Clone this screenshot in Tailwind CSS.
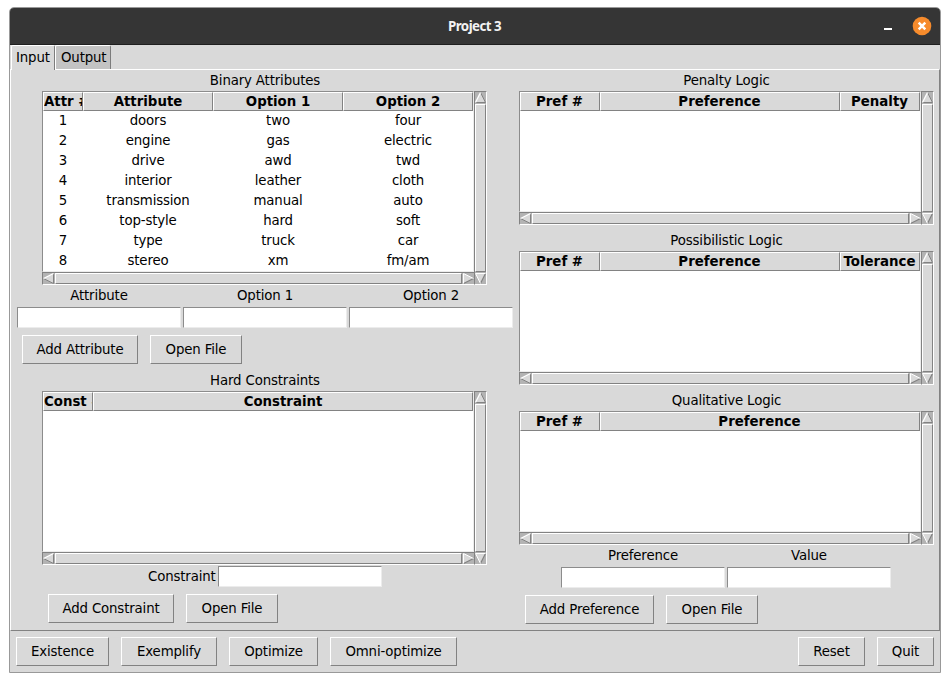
<!DOCTYPE html>
<html lang="en">
<head>
<meta charset="utf-8">
<title>Project 3</title>
<script src="https://cdn.jsdelivr.net/npm/@tailwindcss/browser@4"></script>
</head>
<body class="bg-white w-[950px] h-[682px] overflow-hidden pt-[7px] pl-[9px] font-['DejaVu_Sans',sans-serif] text-[13.33px] tracking-[-0.15px] leading-[22px] text-black">
<div class="w-[932px] h-[666px] border border-[#999999] rounded-t-[5px] bg-[#d9d9d9] flex flex-col overflow-hidden">
  <header class="h-[37px] shrink-0 bg-[#353535] border-b border-[#1f1f1f] grid grid-cols-[1fr_auto_1fr] items-center">
    <span></span>
    <h1 class="text-[#f2f2f2] font-['Noto_Sans',sans-serif] font-bold text-[13.33px] leading-[20px] tracking-[-0.55px] pr-px">Project 3</h1>
    <div class="flex justify-end items-center gap-[20px] pr-[8px]">
      <span class="w-[8px] h-[2px] bg-white mt-[6px]"></span>
      <svg width="20" height="20" viewBox="0 0 20 20"><circle cx="10" cy="10" r="9.3" fill="#f68b2c"/><path d="M6.7 6.7l6.6 6.6M13.3 6.7l-6.6 6.6" stroke="#fff" stroke-width="2.5"/></svg>
    </div>
  </header>
  <nav class="h-[24px] shrink-0 flex pl-px relative z-10">
    <div class="w-[44px] h-[25px] border-t border-l border-t-white border-l-white border-r border-r-[#7c7c7c] rounded-t-[2px] bg-[#d9d9d9] pl-[4px] pt-[1px]">Input</div>
    <div class="w-[56px] h-[24px] border-t border-l border-t-white border-l-white border-r border-r-[#7c7c7c] rounded-t-[2px] bg-[#c3c3c3] pl-[5px] pt-[1px]">Output</div>
  </nav>
  <main class="h-[562px] shrink-0 border border-t-white border-l-white border-r-[#828282] border-b-[#828282] flex pl-px">
    <section class="w-[504px] shrink-0">
      <h2 class="h-[21px] pl-[2px] text-center">Binary Attributes</h2>
      <div data-tree="binary" class="ml-[30px] w-[445px] h-[194px]"></div>
      <div class="h-[22px] grid grid-cols-3 ml-[4px] w-[498px] text-center"><span>Attribute</span><span>Option 1</span><span>Option 2</span></div>
      <div class="flex gap-[2px] pl-[5px]">
        <div class="w-[164px] h-[21px] bg-white border border-t-[#8c8c8c] border-l-[#8c8c8c] border-b-[#ececec] border-r-[#ececec]"></div>
        <div class="w-[164px] h-[21px] bg-white border border-t-[#8c8c8c] border-l-[#8c8c8c] border-b-[#ececec] border-r-[#ececec]"></div>
        <div class="w-[164px] h-[21px] bg-white border border-t-[#8c8c8c] border-l-[#8c8c8c] border-b-[#ececec] border-r-[#ececec]"></div>
      </div>
      <div class="flex gap-[12px] pl-[10px] mt-[7px]">
        <button class="w-[116px] h-[29px] border border-t-white border-l-white border-b-[#828282] border-r-[#828282]">Add Attribute</button>
        <button class="w-[92px] h-[29px] border border-t-white border-l-white border-b-[#828282] border-r-[#828282]">Open File</button>
      </div>
      <h2 class="h-[21px] mt-[6px] pl-[2px] text-center">Hard Constraints</h2>
      <div data-tree="hard" class="ml-[30px] w-[445px] h-[174px]"></div>
      <div class="flex pl-[136px] mt-px">
        <span class="w-[70px] h-[21px]">Constraint</span>
        <div class="w-[164px] h-[21px] bg-white border border-t-[#8c8c8c] border-l-[#8c8c8c] border-b-[#ececec] border-r-[#ececec]"></div>
      </div>
      <div class="flex gap-[12px] pl-[36px] mt-[7px]">
        <button class="w-[126px] h-[29px] border border-t-white border-l-white border-b-[#828282] border-r-[#828282]">Add Constraint</button>
        <button class="w-[92px] h-[29px] border border-t-white border-l-white border-b-[#828282] border-r-[#828282]">Open File</button>
      </div>
    </section>
    <section class="w-[415px] shrink-0 ml-[3px]">
      <h2 class="h-[21px] text-center">Penalty Logic</h2>
      <div data-tree="penalty" class="w-[415px] h-[134px]"></div>
      <h2 class="h-[21px] mt-[5px] text-center">Possibilistic Logic</h2>
      <div data-tree="possibilistic" class="w-[415px] h-[134px]"></div>
      <h2 class="h-[21px] mt-[5px] text-center">Qualitative Logic</h2>
      <div data-tree="qualitative" class="w-[415px] h-[134px]"></div>
      <div class="h-[22px] grid grid-cols-2 ml-[41px] w-[332px] text-center"><span>Preference</span><span>Value</span></div>
      <div class="flex gap-[2px] pl-[42px]">
        <div class="w-[164px] h-[21px] bg-white border border-t-[#8c8c8c] border-l-[#8c8c8c] border-b-[#ececec] border-r-[#ececec]"></div>
        <div class="w-[164px] h-[21px] bg-white border border-t-[#8c8c8c] border-l-[#8c8c8c] border-b-[#ececec] border-r-[#ececec]"></div>
      </div>
      <div class="flex gap-[12px] pl-[6px] mt-[7px]">
        <button class="w-[129px] h-[29px] border border-t-white border-l-white border-b-[#828282] border-r-[#828282]">Add Preference</button>
        <button class="w-[92px] h-[29px] border border-t-white border-l-white border-b-[#828282] border-r-[#828282]">Open File</button>
      </div>
    </section>
  </main>
  <footer class="flex gap-[12px] pl-[6px] pr-[6px] pt-[6px]">
    <button class="w-[93px] h-[29px] border border-t-white border-l-white border-b-[#828282] border-r-[#828282]">Existence</button>
    <button class="w-[96px] h-[29px] border border-t-white border-l-white border-b-[#828282] border-r-[#828282]">Exemplify</button>
    <button class="w-[89px] h-[29px] border border-t-white border-l-white border-b-[#828282] border-r-[#828282]">Optimize</button>
    <button class="w-[127px] h-[29px] border border-t-white border-l-white border-b-[#828282] border-r-[#828282]">Omni-optimize</button>
    <button class="w-[67px] h-[29px] ml-auto border border-t-white border-l-white border-b-[#828282] border-r-[#828282]">Reset</button>
    <button class="w-[57px] h-[29px] border border-t-white border-l-white border-b-[#828282] border-r-[#828282]">Quit</button>
  </footer>
</div>
<script>
const trees = {
  binary: { pad: '', cols: [['Attr #', 40], ['Attribute', 130], ['Option 1', 130], ['Option 2', 130]],
    rows: [['1','doors','two','four'],['2','engine','gas','electric'],['3','drive','awd','twd'],['4','interior','leather','cloth'],['5','transmission','manual','auto'],['6','top-style','hard','soft'],['7','type','truck','car'],['8','stereo','xm','fm/am']] },
  hard: { pad: '', cols: [['Const #', 50], ['Constraint', 380]], rows: [] },
  penalty: { pad: 'pr-px', cols: [['Pref #', 80], ['Preference', 240], ['Penalty', 80]], rows: [] },
  possibilistic: { pad: 'pr-px', cols: [['Pref #', 80], ['Preference', 240], ['Tolerance', 80]], rows: [] },
  qualitative: { pad: 'pr-px', cols: [['Pref #', 80], ['Preference', 320]], rows: [] }
};
// Bevelled scrollbar arrows: light on the upper-left edges, dark on the lower-right ones.
const arrow = {
  up: '<path d="M5.5 .5L.5 10.5H10.5Z" fill="#d9d9d9"/><path d="M.5 10.5H10.5L5.5 .5" fill="none" stroke="#828282"/><path d="M.5 10.5L5.5 .5" stroke="#fff" stroke-width="1.3"/>',
  down: '<path d="M.5 .5H10.5L5.5 10.5Z" fill="#d9d9d9"/><path d="M10.5 .5L5.5 10.5" stroke="#828282" stroke-width="1.2"/><path d="M10.5 .5H.5L5.5 10.5" fill="none" stroke="#fff"/>',
  left: '<path d="M.5 5.5L10.5 .5V10.5Z" fill="#d9d9d9"/><path d="M10.5 .5V10.5L.5 5.5" fill="none" stroke="#828282"/><path d="M.5 5.5L10.5 .5" stroke="#fff" stroke-width="1.3"/>',
  right: '<path d="M.5 .5V10.5L10.5 5.5Z" fill="#d9d9d9"/><path d="M.5 10.5L10.5 5.5" stroke="#828282" stroke-width="1.2"/><path d="M.5 10.5V.5L10.5 5.5" fill="none" stroke="#fff"/>'
};
const icon = d => `<svg class="shrink-0" width="11" height="11" viewBox="0 0 11 11">${arrow[d]}</svg>`;
document.querySelectorAll('[data-tree]').forEach(el => {
  const t = trees[el.dataset.tree];
  const head = t.cols.map(([n, w]) => `<div style="width:${w}px" class="h-[19px] shrink-0 overflow-hidden whitespace-nowrap bg-[#d9d9d9] border border-t-white border-l-white border-b-[#828282] border-r-[#828282] font-bold tracking-normal leading-[17px] ${w < 60 ? 'text-left' : 'text-center'} ${t.pad}">${n}</div>`).join('');
  const rows = t.rows.map(r => `<div class="flex h-[20px] leading-[19px]">${r.map((c, i) => `<div style="width:${t.cols[i][1]}px" class="shrink-0 text-center">${c}</div>`).join('')}</div>`).join('');
  el.innerHTML = `<div class="w-full h-full grid grid-cols-[1fr_13px] grid-rows-[1fr_13px]">
    <div class="overflow-hidden bg-white border border-t-[#8c8c8c] border-l-[#8c8c8c] border-b-[#ececec] border-r-[#ececec]"><div class="flex">${head}</div>${rows}</div>
    <div class="row-span-2 flex flex-col bg-[#b3b3b3] border border-t-[#828282] border-l-[#828282] border-r-white border-b-white">${icon('up')}<div class="grow my-px bg-[#d9d9d9] border border-t-white border-l-white border-b-[#828282] border-r-[#828282]"></div>${icon('down')}</div>
    <div class="flex bg-[#b3b3b3] border border-r-0 border-t-[#828282] border-l-[#828282] border-b-white">${icon('left')}<div class="grow mx-px bg-[#d9d9d9] border border-t-white border-l-white border-b-[#828282] border-r-[#828282]"></div>${icon('right')}</div>
  </div>`;
});
</script>
</body>
</html>
